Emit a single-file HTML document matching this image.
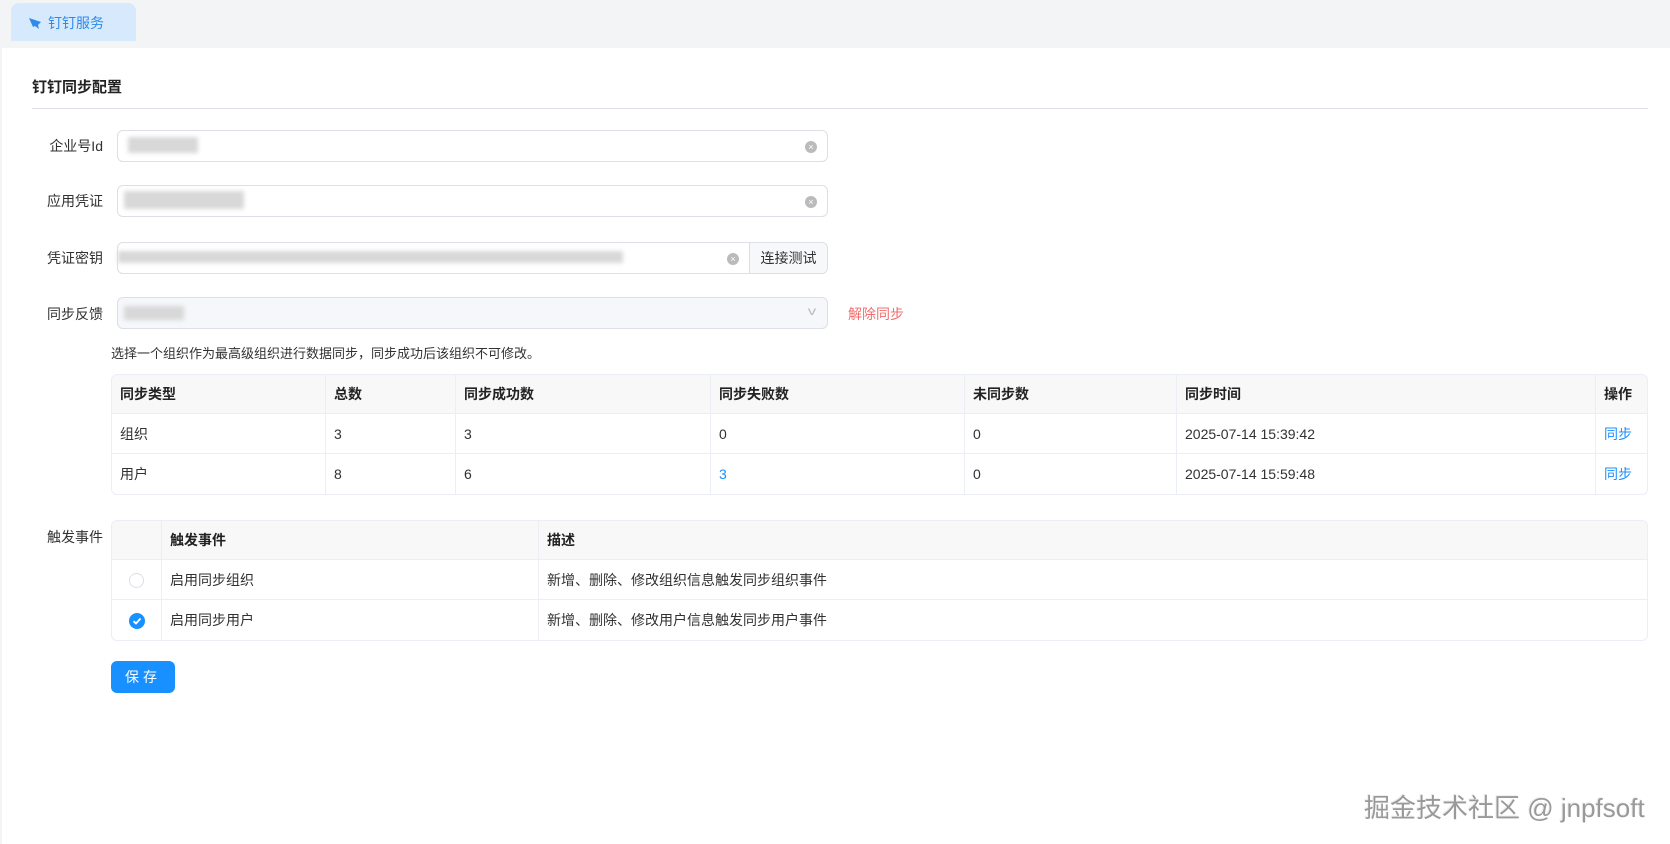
<!DOCTYPE html>
<html><head><meta charset="utf-8"><style>
*{box-sizing:border-box;margin:0;padding:0}
body{width:1670px;height:844px;background:#f3f4f6;font-family:"Liberation Sans","Noto Sans CJK SC",sans-serif;font-size:14px;color:#303133;position:relative;overflow:hidden}
.tabbar{position:absolute;left:0;top:0;width:1670px;height:48px;background:#f3f4f6}
.tab{position:absolute;left:11px;top:3px;width:125px;height:38px;background:#d7e9fc;border-radius:8px 8px 0 0;color:#2f8bea;font-size:14px;line-height:40px;padding-left:37px}
.tab svg{position:absolute;left:18px;top:14px}
.card{position:absolute;left:2px;top:48px;width:1668px;height:796px;background:#fff}
.abs{position:absolute}
.title{left:32px;top:76px;font-size:15px;font-weight:bold;color:#222}
.hr{left:32px;top:108px;width:1616px;height:1px;background:#dcdfe6}
.lbl{position:absolute;width:80px;text-align:right;left:23px;color:#303133}
.inp{position:absolute;left:117px;width:711px;height:32px;border:1px solid #dcdfe6;border-radius:6px;background:#fff}
.blur{position:absolute;background:#d8d8d8;filter:blur(2px)}
.clr{position:absolute;right:10px;top:10px;width:12px;height:12px;border-radius:50%;background:#bbb;color:#fff;font-size:9px;line-height:12px;text-align:center}
table{position:absolute;border-collapse:separate;border-spacing:0;border:1px solid #ebeef5;border-radius:6px;overflow:hidden}
td,th{border-right:1px solid #ebeef5;border-bottom:1px solid #ebeef5;text-align:left;padding:0 8px;font-size:14px;height:40px}
th{background:#f8f8f9;font-weight:bold;color:#222;height:39px}
tr td:last-child,tr th:last-child{border-right:none}
tr:last-child td{border-bottom:none}
.blue{color:#1890ff}
</style></head><body>
<div class="tabbar"><div class="tab"><svg width="13" height="13" viewBox="0 0 13 13"><path d="M0 1 L12 5 L9 8 L10 12 L6 9 L4 10 Z" fill="#2f8bea"/></svg>钉钉服务</div></div>
<div class="card"></div>
<div class="abs title">钉钉同步配置</div>
<div class="abs hr"></div>

<div class="lbl" style="top:136px">企业号Id</div>
<div class="inp" style="top:130px"><div class="blur" style="left:10px;top:6px;width:70px;height:16px"></div><div class="clr">×</div></div>
<div class="lbl" style="top:191px">应用凭证</div>
<div class="inp" style="top:185px"><div class="blur" style="left:6px;top:5px;width:120px;height:18px"></div><div class="clr">×</div></div>
<div class="lbl" style="top:248px">凭证密钥</div>
<div class="inp" style="top:242px;"><div class="blur" style="left:0;top:8px;width:505px;height:12px"></div><div class="clr" style="right:88px">×</div><div style="position:absolute;right:0;top:0;width:78px;height:30px;border-left:1px solid #dcdfe6;background:#f7f8fa;border-radius:0 6px 6px 0;text-align:center;line-height:30px">连接测试</div></div>
<div class="lbl" style="top:304px">同步反馈</div>
<div class="inp" style="top:297px;background:#f5f7fa"><div class="blur" style="left:6px;top:8px;width:60px;height:14px"></div><div style="position:absolute;right:12px;top:6px;color:#bbb;font-size:12px;transform:scaleX(1.4)">v</div></div>
<div class="abs" style="left:848px;top:304px;color:#f56c6c">解除同步</div>
<div class="abs" style="left:111px;top:343px;font-size:13px">选择一个组织作为最高级组织进行数据同步，同步成功后该组织不可修改。</div>

<table style="left:111px;top:374px;width:1537px">
<tr><th style="width:214px">同步类型</th><th style="width:130px">总数</th><th style="width:255px">同步成功数</th><th style="width:254px">同步失败数</th><th style="width:212px">未同步数</th><th style="width:419px">同步时间</th><th>操作</th></tr>
<tr><td>组织</td><td>3</td><td>3</td><td>0</td><td>0</td><td>2025-07-14 15:39:42</td><td class="blue">同步</td></tr>
<tr><td>用户</td><td>8</td><td>6</td><td class="blue">3</td><td>0</td><td>2025-07-14 15:59:48</td><td class="blue">同步</td></tr>
</table>

<div class="lbl" style="top:527px">触发事件</div>
<table style="left:111px;top:520px;width:1537px">
<tr><th style="width:50px"></th><th style="width:377px">触发事件</th><th>描述</th></tr>
<tr><td style="text-align:center"><span style="display:inline-block;width:15px;height:15px;border:1px solid #dcdfe6;border-radius:50%;vertical-align:middle"></span></td><td>启用同步组织</td><td>新增、删除、修改组织信息触发同步组织事件</td></tr>
<tr><td style="text-align:center"><span style="display:inline-block;width:16px;height:16px;background:#1890ff;border-radius:50%;vertical-align:middle;position:relative"><svg width="16" height="16" style="position:absolute;left:0;top:0"><path d="M4.5 8.2 L7 10.5 L11.5 5.5" stroke="#fff" stroke-width="1.8" fill="none"/></svg></span></td><td>启用同步用户</td><td>新增、删除、修改用户信息触发同步用户事件</td></tr>
</table>

<div class="abs" style="left:111px;top:661px;width:64px;height:32px;background:#1890ff;border-radius:6px;color:#fff;text-align:center;line-height:32px;letter-spacing:4px">保存</div>

<div class="abs" style="left:1364px;top:788px;font-size:26px;color:#999;text-shadow:1px 1px 0 #fff,-1px -1px 0 #eee">掘金技术社区 @ jnpfsoft</div>
</body></html>
